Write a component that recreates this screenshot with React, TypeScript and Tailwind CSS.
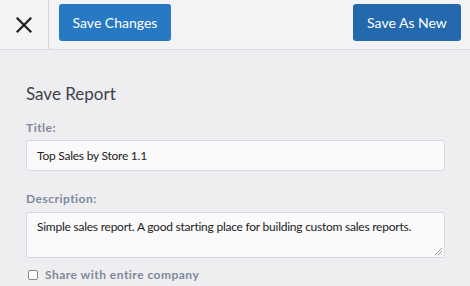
import React from "react";

export default function App() {
  return (
    <div className="h-[286px] w-[470px] overflow-hidden bg-[#eeeef0] font-['Lato',sans-serif]">
      <header className="flex h-[50px] items-center border-b border-[#dcdce0] bg-[#f3f3f5]">
        <button className="flex h-full w-[49px] items-center justify-center border-r border-[#d6d6da] text-[#1e1e1e]">
          <svg width="16" height="16" viewBox="0 0 16 16" fill="none" stroke="currentColor" strokeWidth="2.2" strokeLinecap="square">
            <path d="M1.5 1.5l13 13M14.5 1.5l-13 13" />
          </svg>
        </button>
        <div className="flex flex-1 items-center justify-between pl-[10px] pr-[9px] pb-[5px]">
          <button className="h-[37px] w-[112px] rounded-[3px] bg-[#2778c5] text-[14px] text-white">Save Changes</button>
          <button className="h-[37px] w-[108px] rounded-[3px] bg-[#2468ad] text-[14px] text-white">Save As New</button>
        </div>
      </header>
      <main className="px-[26px] pt-[34px] pr-[25px]">
        <h2 className="text-[17px] leading-[20px] text-[#3d424a]">Save Report</h2>
        <label className="mt-[16px] block text-[12px] font-bold leading-[16px] tracking-[0.04em] text-[#7d889c]">Title:</label>
        <div className="mt-[4px] flex h-[31px] items-center rounded-[3px] border border-[#cfdbe6] bg-[#fafafa] px-[10px] text-[12px] tracking-[-0.02em] text-[#222]">
          Top Sales by Store 1.1
        </div>
        <label className="mt-[20px] block text-[12px] font-bold leading-[16px] tracking-[0.04em] text-[#7d889c]">Description:</label>
        <div className="relative mt-[5px] h-[46px] rounded-[3px] border border-[#cfdbe6] bg-[#fafafa] px-[10px] pt-[5px] text-[12px] leading-[18px] tracking-[-0.02em] text-[#222]">
          <span className="whitespace-nowrap">Simple sales report. A good starting place for building custom sales reports.</span>
          <svg className="absolute bottom-[2px] right-[2px]" width="8" height="8" viewBox="0 0 8 8" stroke="#999" strokeWidth="1">
            <path d="M1 8L8 1M4 8L8 4" />
          </svg>
        </div>
        <div className="mt-[9px] flex items-center gap-[7px] pl-[2px]">
          <span className="h-[10px] w-[10px] rounded-[2px] border border-[#8a8a8a] bg-white" />
          <span className="text-[12px] font-bold leading-[16px] tracking-[0.04em] text-[#7d889c]">Share with entire company</span>
        </div>
      </main>
    </div>
  );
}
